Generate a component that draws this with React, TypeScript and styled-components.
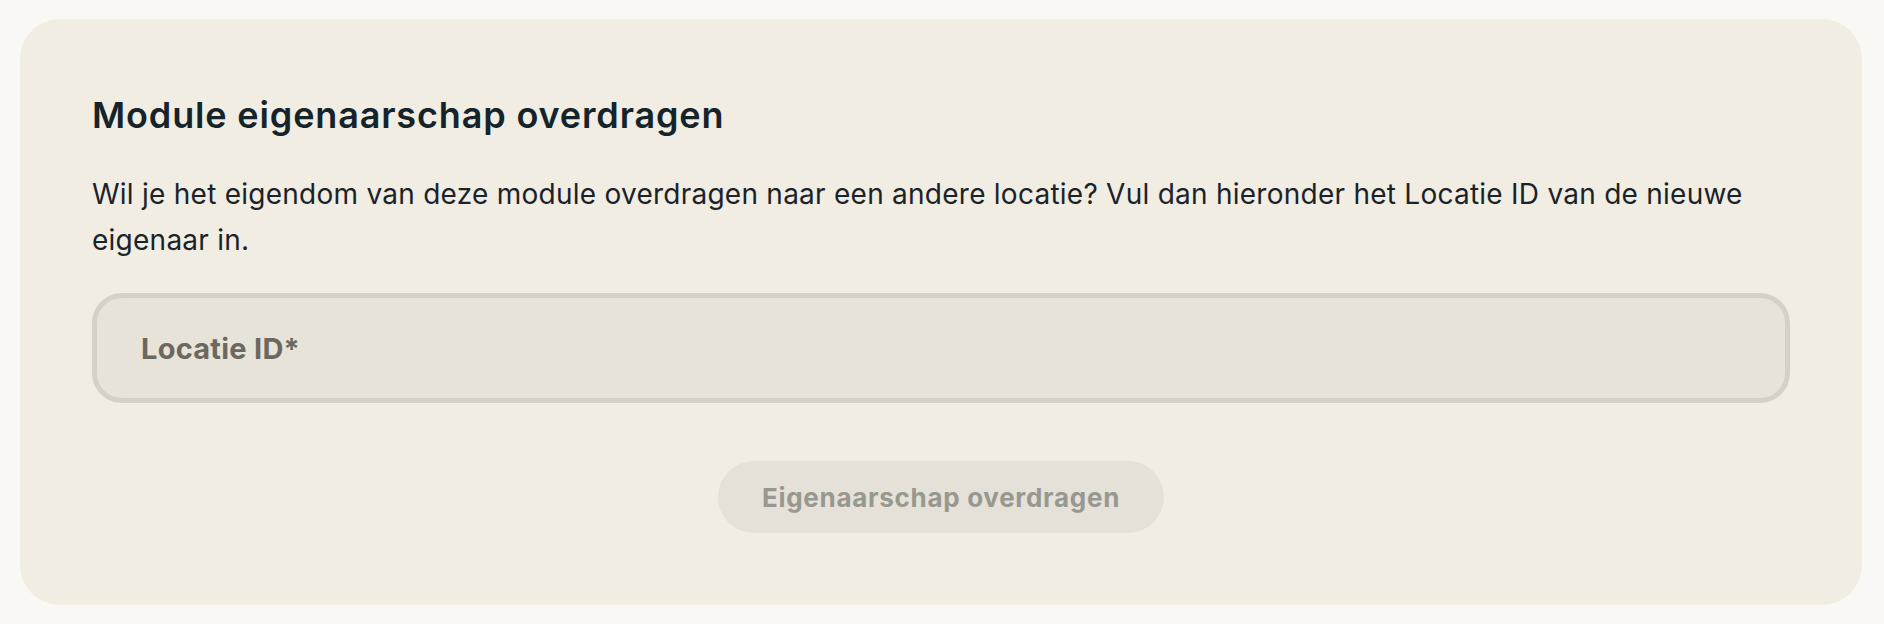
import React from "react";
import styled, { createGlobalStyle } from "styled-components";

const GlobalStyle = createGlobalStyle`
  html, body {
    margin: 0;
    padding: 0;
    background: #f9f8f5;
  }
  body {
    font-family: Inter, "Noto Sans", sans-serif;
    -webkit-font-smoothing: antialiased;
  }
  * { box-sizing: border-box; }
`;

const Page = styled.div`
  width: 1884px;
  height: 624px;
  padding: 19px 22px 19px 20px;
  background: #f9f8f5;
`;

const Card = styled.section`
  height: 586px;
  background: #f1ede3;
  border-radius: 40px;
  padding: 74px 72px 72px 72px;
  display: flex;
  flex-direction: column;
`;

const Title = styled.h2`
  margin: 0;
  font-family: Inter, sans-serif;
  font-weight: 600;
  font-size: 36px;
  line-height: 44px;
  color: #15232a;
  letter-spacing: 0.85px;
`;

const Description = styled.p`
  margin: 34px 0 0 0;
  font-family: Inter, sans-serif;
  font-weight: 400;
  font-size: 28px;
  line-height: 46px;
  color: #1a2329;
  letter-spacing: 0.25px;
`;

const Field = styled.label`
  margin-top: 30px;
  height: 110px;
  flex-shrink: 0;
  border: 5px solid #d6d1c5;
  background: #e7e3d9;
  border-radius: 30px;
  display: flex;
  align-items: center;
  padding-left: 44px;
`;

const FieldLabel = styled.span`
  font-family: Inter, sans-serif;
  font-weight: 700;
  font-size: 29px;
  color: #6b6860;
  letter-spacing: 0.25px;
`;

const Actions = styled.div`
  margin-top: 58px;
  display: flex;
  justify-content: center;
`;

const Button = styled.button`
  height: 72px;
  width: 446px;
  border: none;
  border-radius: 36px;
  background: #e5e1d8;
  color: #979890;
  font-family: Inter, sans-serif;
  font-weight: 700;
  font-size: 26px;
  letter-spacing: 0.7px;
  cursor: not-allowed;
`;

export default function App() {
  return (
    <>
      <GlobalStyle />
      <Page>
        <Card>
          <Title>Module eigenaarschap overdragen</Title>
          <Description>
            Wil je het eigendom van deze module overdragen naar een andere locatie? Vul dan hieronder het Locatie ID van de nieuwe eigenaar in.
          </Description>
          <Field>
            <FieldLabel>Locatie ID*</FieldLabel>
          </Field>
          <Actions>
            <Button disabled>Eigenaarschap overdragen</Button>
          </Actions>
        </Card>
      </Page>
    </>
  );
}
